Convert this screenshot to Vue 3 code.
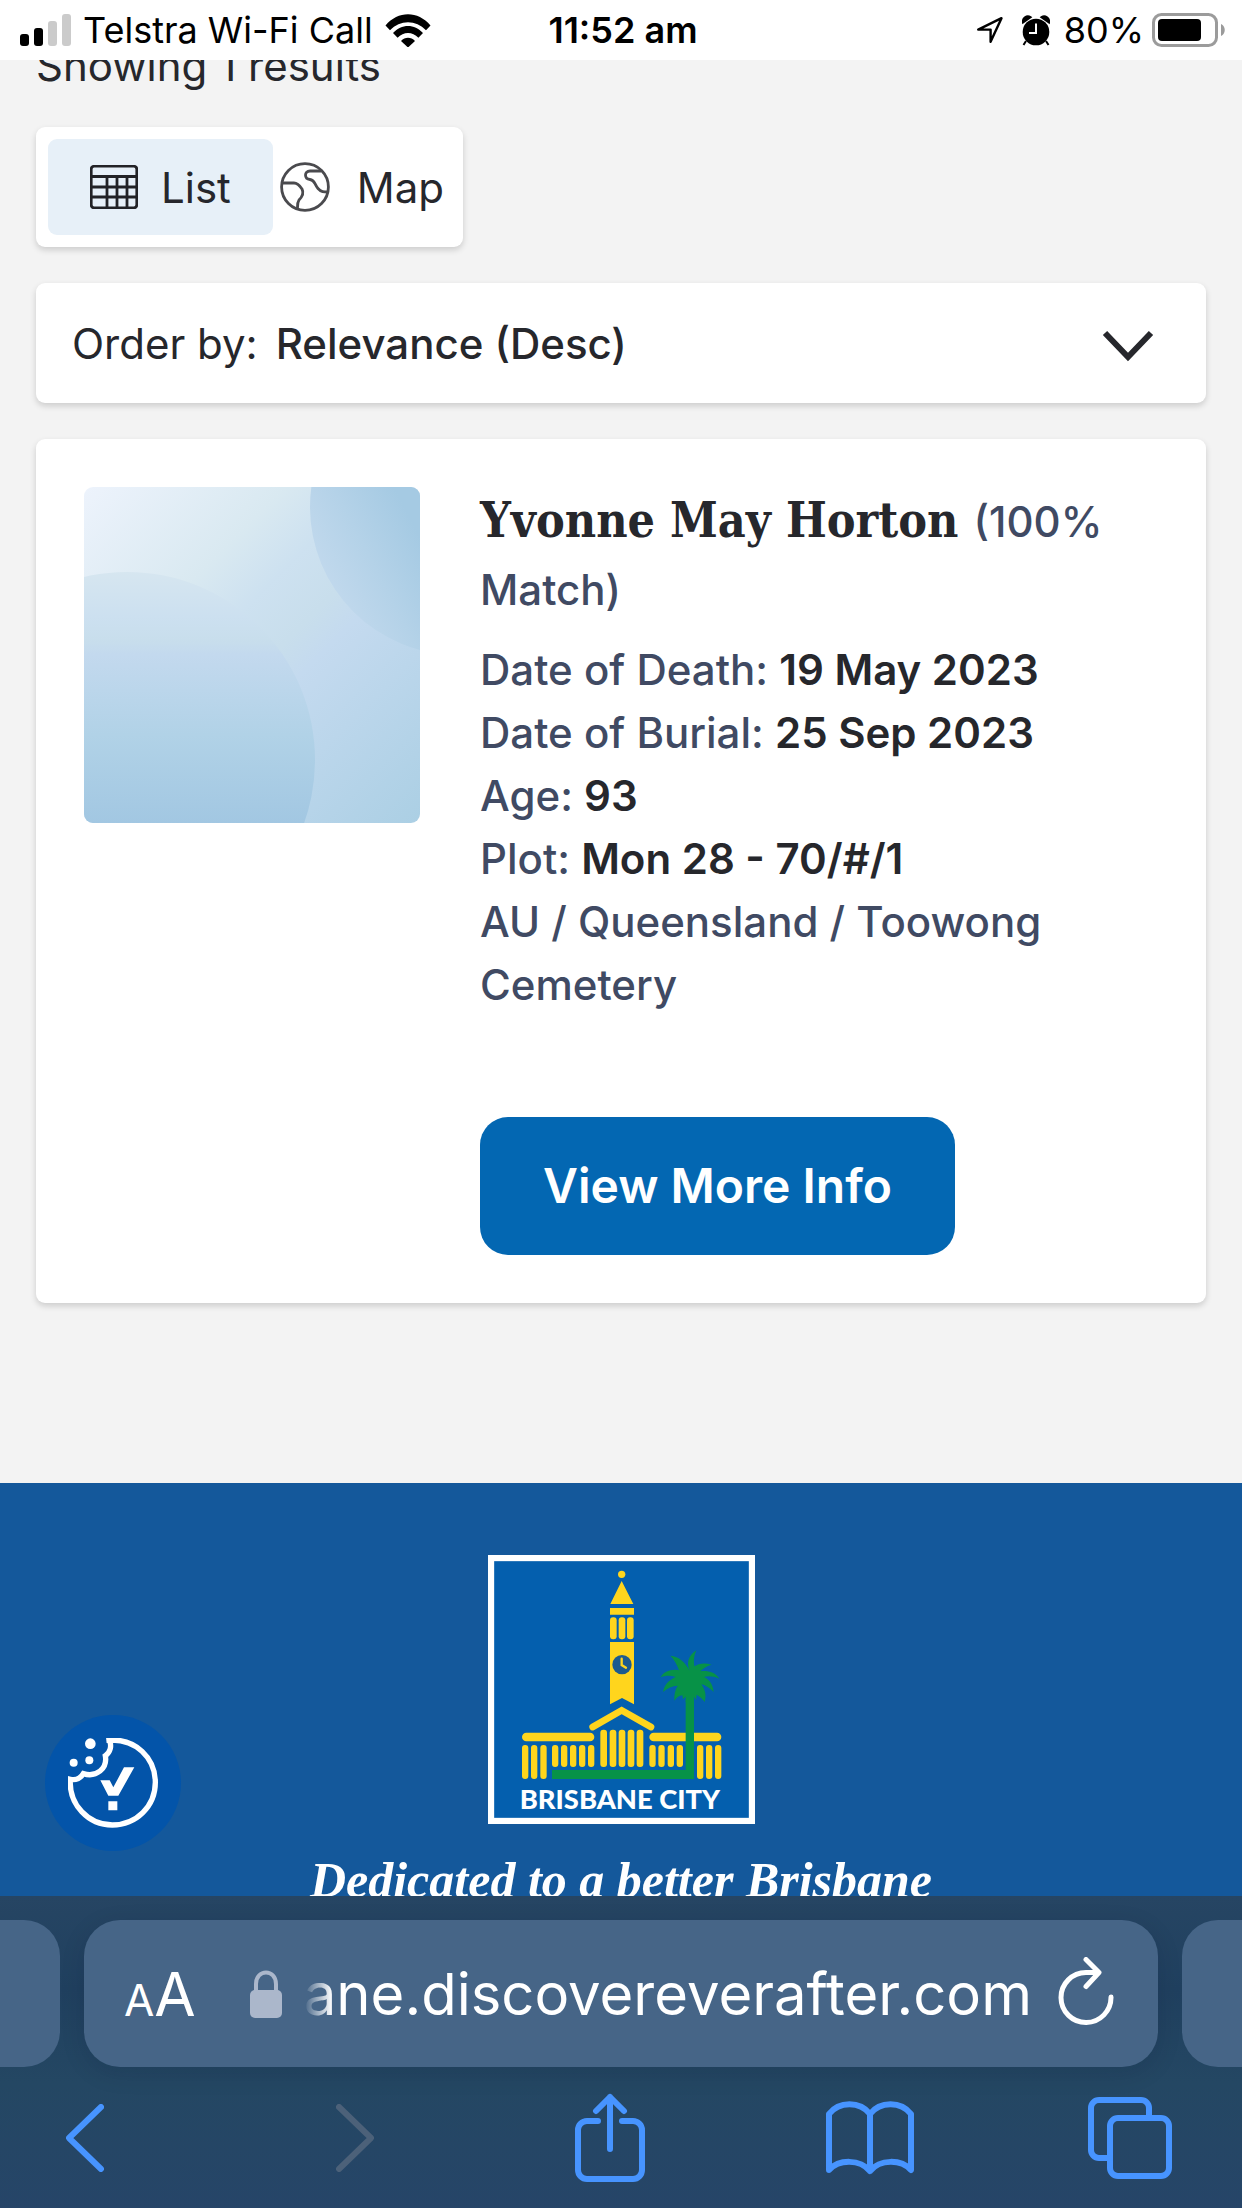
<!-- Cemetery search results as seen in a phone browser: status bar on top,
     scrolled page in the middle, address bar and toolbar at the bottom. -->
<template>
  <div class="screen">
    <header class="status">
      <div class="status-side">
        <svg class="signal" width="51" height="32" viewBox="0 0 51 32" aria-hidden="true">
          <rect x="0" y="20" width="9" height="12" rx="3" />
          <rect x="14" y="14" width="9" height="18" rx="3" />
          <rect x="28" y="7" width="9" height="25" rx="3" fill="#cbcbcb" />
          <rect x="42" y="0" width="9" height="32" rx="3" fill="#cbcbcb" />
        </svg>
        <span class="carrier">Telstra Wi-Fi Call</span>
        <svg width="46" height="33" viewBox="0 0 46 33" aria-hidden="true">
          <path d="M0.5 11.5C13 -3.5 33 -3.5 45.500 11.500L41 16.200C31 5.500 15 5.500 5 16.200Z" />
          <path d="M8 19C16.500 9.500 29.500 9.500 38 19L33.400 23.800C27.500 17.500 18.500 17.500 12.600 23.800Z" />
          <path d="M16 27C20 22.800 26 22.800 30 27L23 33.500Z" />
        </svg>
      </div>
      <strong class="time">11:52 am</strong>
      <div class="status-side status-side--right">
        <svg width="28" height="28" viewBox="0 0 28 28" aria-hidden="true">
          <path d="M25.500 2.200L14.600 25.800V13.600H2.200Z" fill="none" stroke="#000" stroke-width="2.400" stroke-linejoin="round" />
        </svg>
        <svg class="alarm" width="28" height="31" viewBox="0 0 28 31" aria-hidden="true">
          <circle cx="14" cy="17" r="13.300" />
          <path d="M1 7.500A5 5 0 0 1 8.500 2.200ZM27 7.500A5 5 0 0 0 19.500 2.200ZM4 26L1.500 30M24 26L26.500 30" stroke="#000" stroke-width="2" />
          <path d="M14 8.500V18H7" fill="none" stroke="#fff" stroke-width="2" />
        </svg>
        <span>80%</span>
        <svg class="battery" width="74" height="34" viewBox="0 0 74 34" aria-hidden="true">
          <rect x="1.500" y="1.500" width="63" height="31" rx="8" fill="none" stroke="#9b9b9b" stroke-width="3" />
          <rect x="6" y="6" width="43" height="22" rx="4" />
          <path d="M69 11C74 13 74 21 69 23Z" fill="#9b9b9b" />
        </svg>
      </div>
    </header>

    <div class="page">
      <main class="results">
        <p class="count">Showing 1 results</p>

        <div class="views">
          <button
            type="button"
            class="view"
            :class="{ 'view--active': view === 'list' }"
            @click="view = 'list'"
          >
            <svg width="48" height="44" viewBox="0 0 48 44" aria-hidden="true">
              <g fill="none" stroke="#222226" stroke-width="2.800">
                <rect x="1.200" y="1.200" width="45.600" height="41.600" rx="3" />
                <path d="M1 11.500H47M1 22H47M1 32H47M17 11.500V43M27 11.500V43M37 11.500V43" />
              </g>
            </svg>
            List
          </button>
          <button
            type="button"
            class="view view--map"
            :class="{ 'view--active': view === 'map' }"
            @click="view = 'map'"
          >
            <svg width="50" height="50" viewBox="0 0 50 50" aria-hidden="true">
              <g fill="none" stroke="#4a4a4e" stroke-width="2.800" stroke-linejoin="round">
                <circle cx="25" cy="25" r="23.400" />
                <path d="M1.500 21H14C17 21 20 24 22 27C24 31 23 34 19 38C17 41 17.500 44 17.500 47" />
                <path d="M41 9H30C24 9 24 17 30 17.500C35 18 34 22 38 26.500C41 30 44 30 48 30" />
              </g>
            </svg>
            Map
          </button>
        </div>

        <div class="order">
          <label for="order">Order by:</label>
          <select id="order" v-model="order">
            <option>Relevance (Desc)</option>
          </select>
          <svg class="chevron" width="52" height="38" viewBox="0 0 52 38" aria-hidden="true">
            <path d="M3 9L26 33L49 9" fill="none" stroke="#26272c" stroke-width="6" />
          </svg>
        </div>

        <article class="record">
          <svg class="cover" width="336" height="336" viewBox="0 0 336 336" aria-hidden="true">
            <defs>
              <linearGradient id="sky" x1="0" y1="0" x2="1" y2="1">
                <stop offset="0" stop-color="#edf3fc" />
                <stop offset="0.300" stop-color="#d9e9f1" />
                <stop offset="0.420" stop-color="#cde1f0" />
                <stop offset="0.530" stop-color="#c8deec" />
                <stop offset="0.600" stop-color="#c4daef" />
                <stop offset="1" stop-color="#abcfe4" />
              </linearGradient>
              <linearGradient id="hill" x1="0" y1="85" x2="0" y2="336" gradientUnits="userSpaceOnUse">
                <stop offset="0" stop-color="#d6e6f0" />
                <stop offset="0.180" stop-color="#cce0f0" />
                <stop offset="0.270" stop-color="#c8deec" />
                <stop offset="0.330" stop-color="#c3d9ee" />
                <stop offset="0.650" stop-color="#b1d2e7" />
                <stop offset="1" stop-color="#a2c7e2" />
              </linearGradient>
              <linearGradient id="sun" x1="240" y1="100" x2="336" y2="50" gradientUnits="userSpaceOnUse">
                <stop offset="0" stop-color="#c2d9ed" />
                <stop offset="0.500" stop-color="#b4d2e8" />
                <stop offset="1" stop-color="#a5cae3" />
              </linearGradient>
            </defs>
            <rect width="336" height="336" fill="url(#sky)" />
            <circle cx="374" cy="20" r="148" fill="url(#sun)" />
            <circle cx="43" cy="273" r="188" fill="url(#hill)" />
          </svg>
          <div class="info">
            <h2 class="name">
              Yvonne May Horton <span class="match">(100% Match)</span>
            </h2>
            <ul class="facts">
              <li v-for="fact in facts" :key="fact.label">
                {{ fact.label }}: <b>{{ fact.value }}</b>
              </li>
              <li>AU / Queensland / Toowong Cemetery</li>
            </ul>
            <a class="more" href="#">View More Info</a>
          </div>
        </article>
      </main>

      <footer class="footer">
        <svg class="crest" width="267" height="269" viewBox="24 45 801 807" role="img" aria-label="Brisbane City">
          <rect x="33" y="54" width="783" height="789" fill="#045fae" stroke="#fff" stroke-width="19" />
          <g fill="#ffd51d">
            <circle cx="425" cy="103" r="11" />
            <path d="M425 123L460 192H391ZM390 204H462V224H390ZM390 306H462V493L426 474L390 493Z" />
            <rect v-for="x in [390, 416, 441]" :key="x" :x="x" y="232" width="20" height="66" rx="9" />
            <rect v-for="x in [361, 389, 416, 443, 470]" :key="x" :x="x" y="569" width="20" height="112" rx="9" />
            <rect v-for="x in [216, 243, 270, 297, 324, 508, 535, 563, 590]" :key="x" :x="x" y="615" width="19" height="66" rx="9" />
            <rect v-for="x in [126, 153, 181, 651, 678, 705]" :key="x" :x="x" y="615" width="19" height="102" rx="9" />
            <rect x="126" y="578" width="217" height="26" rx="13" />
            <rect x="508" y="578" width="216" height="26" rx="13" />
          </g>
          <path d="M338 561L425 511L513 561" fill="none" stroke="#ffd51d" stroke-width="20" stroke-linecap="round" />
          <circle cx="426" cy="374" r="29" fill="#1d5b8f" />
          <path d="M425 356V375L438 383" fill="none" stroke="#ffd51d" stroke-width="7" stroke-linecap="round" />
          <path d="M617 690V480H642V717H216V690Z" fill="#079247" />
          <path
            d="M629 392C620 372 622 348 649 331C641 350 641 362 643 379C655 371 673 367 695 374C678 379 668 386 661 394C684 391 706 397 718 416C700 409 684 407 672 411C689 419 699 434 701 456C688 443 675 435 664 433C675 448 680 465 674 486C667 476 659 469 650 464L648 480L642 470V486H617V470L609 478L607 466C598 467 590 472 583 482C582 465 585 449 593 437C577 438 562 444 549 456C552 436 566 420 587 411C571 406 557 406 542 412C551 395 574 386 597 391C590 370 581 357 571 347C597 349 616 367 629 392Z"
            fill="#079247"
          />
          <text x="119" y="808" class="crest-text">BRISBANE CITY</text>
        </svg>
        <p class="motto">Dedicated to a better Brisbane</p>

        <button type="button" class="cookie" aria-label="Cookie settings">
          <svg width="90" height="90" viewBox="0 0 270 270" aria-hidden="true">
            <path
              d="M115 7C205 -2 262 62 262 133C262 205 205 261 133 261C61 261 2 200 7 124C25 128 39 119 46 107C85 119 119 92 112 53C127 43 132 24 124 7"
              fill="none" stroke="#fff" stroke-width="16"
            />
            <circle cx="67" cy="17" r="16" fill="#fff" />
            <circle cx="17" cy="74" r="12" fill="#fff" />
            <circle cx="64" cy="67" r="12" fill="#fff" />
            <path d="M97 127H125L136 148L168 88H199L151 173H121ZM121 190H148V217H121Z" fill="#fff" />
          </svg>
        </button>
      </footer>
    </div>

    <footer class="browser">
      <div class="tabs">
        <div class="tab tab--before"></div>
        <div class="tab tab--current">
          <button type="button" class="text-size" aria-label="Text size">
            <span class="text-size-small">A</span>A
          </button>
          <svg class="lock" width="32" height="48" viewBox="0 0 32 48" aria-hidden="true">
            <path d="M6 23V14C6 -1.500 26 -1.500 26 14V23" fill="none" stroke="#abb7cb" stroke-width="4" />
            <rect y="20" width="32" height="28" rx="5" fill="#abb7cb" />
          </svg>
          <input v-model="address" class="address" type="text" aria-label="Address">
          <button type="button" class="reload" aria-label="Reload">
            <svg width="56" height="74" viewBox="0 0 56 74" aria-hidden="true">
              <path d="M28 2.500L41 15.500L28 29.500M40 15.500H28A25 25 0 1 0 53 40" fill="none" stroke="#fff" stroke-width="5" stroke-linecap="round" stroke-linejoin="round" />
            </svg>
          </button>
        </div>
        <div class="tab tab--after"></div>
      </div>
      <nav class="tools">
        <button type="button" aria-label="Back">
          <svg width="38" height="68" viewBox="0 0 38 68"><path d="M35 3L3 34L35 65" /></svg>
        </button>
        <button type="button" aria-label="Forward" disabled>
          <svg width="38" height="68" viewBox="0 0 38 68"><path d="M3 3L35 34L3 65" /></svg>
        </button>
        <button type="button" aria-label="Share">
          <svg width="70" height="90" viewBox="0 0 70 90">
            <path d="M23 28H12A9 9 0 0 0 3 37V77A9 9 0 0 0 12 86H58A9 9 0 0 0 67 77V37A9 9 0 0 0 58 28H47M35 56V4M21 18L35 4L49 18" />
          </svg>
        </button>
        <button type="button" aria-label="Bookmarks">
          <svg width="88" height="74" viewBox="0 0 88 74">
            <path d="M44 13C34 0 13 0 3 13V69C13 58 34 58 44 70C54 58 75 58 85 69V13C75 0 54 0 44 13V70" />
          </svg>
        </button>
        <button type="button" aria-label="Tabs">
          <svg width="84" height="82" viewBox="0 0 84 82">
            <rect x="22" y="21" width="59" height="58" rx="8" />
            <path d="M61 21V11A8 8 0 0 0 53 3H11A8 8 0 0 0 3 11V53A8 8 0 0 0 11 61H22" />
          </svg>
        </button>
      </nav>
    </footer>
  </div>
</template>

<script setup>
import { ref } from 'vue'

const view = ref('list')
const order = ref('Relevance (Desc)')
const address = ref('ane.discovereverafter.com')

const facts = [
  { label: 'Date of Death', value: '19 May 2023' },
  { label: 'Date of Burial', value: '25 Sep 2023' },
  { label: 'Age', value: '93' },
  { label: 'Plot', value: 'Mon 28 - 70/#/1' },
]
</script>

<style>
body { margin: 0; }
</style>

<style scoped>
.screen {
  display: flex;
  flex-direction: column;
  height: 100vh;
  overflow: hidden;
  font-family: Inter, "Liberation Sans", sans-serif;
  color: #26272c;
  background: #f3f3f3;
}
button, input, select {
  margin: 0;
  padding: 0;
  border: none;
  background: none;
  font: inherit;
  color: inherit;
}
button { cursor: pointer; }
svg { display: block; flex: none; }

/* status bar */
.status {
  display: grid;
  grid-template-columns: 1fr auto 1fr;
  align-items: center;
  height: 60px;
  flex: none;
  padding: 0 16px 0 20px;
  box-sizing: border-box;
  background: #fff;
  color: #000;
  font-size: 36px;
  white-space: nowrap;
}
.status-side { display: flex; align-items: center; }
.status-side--right { justify-content: flex-end; }
.carrier { margin: 0 12px; }
.time { font-weight: 600; }
.alarm { margin: 0 14px 0 18px; }
.battery { margin-left: 8px; }

/* page */
.page {
  flex: 1;
  min-height: 0;
  overflow: hidden;
}
.results {
  display: flex;
  flex-direction: column;
  gap: 36px;
  margin-top: -24px;
  padding: 0 36px 180px;
}
.count {
  margin: 0 0 -5px;
  font-size: 42px;
  line-height: 60px;
}
.views, .order, .record {
  background: #fff;
  border-radius: 9px;
  box-shadow: 0 3px 6px rgba(0, 0, 0, 0.16);
}
.views {
  display: flex;
  align-self: flex-start;
  padding: 12px;
}
.view {
  display: flex;
  align-items: center;
  gap: 23px;
  height: 96px;
  padding: 0 42px;
  border-radius: 9px;
  font-size: 42px;
}
.view--map { gap: 27px; padding: 0 7px; }
.view--active { background: #e7f0f8; }
.order {
  display: flex;
  align-items: center;
  gap: 18px;
  height: 120px;
  padding: 0 52px 0 36px;
  font-size: 42px;
}
.order select {
  flex: 1;
  appearance: none;
  font-weight: 500;
}
.chevron { pointer-events: none; }
.record {
  display: flex;
  align-items: flex-start;
  gap: 60px;
  padding: 48px;
}
.cover { border-radius: 9px; }
.info {
  flex: 1;
  color: #404a63;
  font-size: 42px;
  font-weight: 500;
}
.name {
  margin: 0 0 15px;
  color: #26272c;
  font-family: "DejaVu Serif Condensed", "DejaVu Serif", serif;
  font-size: 48px;
  font-weight: 700;
  line-height: 66px;
}
.match {
  color: #404a63;
  font-family: Inter, "Liberation Sans", sans-serif;
  font-size: 42px;
  font-weight: 500;
}
.facts {
  margin: 0 0 101px;
  padding: 0;
  list-style: none;
  line-height: 63px;
}
.facts b { color: #26272c; font-weight: 600; }
.more {
  display: inline-block;
  padding: 0 63px;
  border-radius: 28px;
  background: #0367b2;
  color: #fff;
  font-size: 48px;
  font-weight: 600;
  line-height: 138px;
  text-decoration: none;
  vertical-align: top;
}

/* council footer */
.footer {
  position: relative;
  display: flex;
  flex-direction: column;
  align-items: center;
  min-height: 480px;
  padding-top: 72px;
  background: #14589b;
}
.crest-text {
  fill: #fff;
  font-family: Lato, sans-serif;
  font-size: 82px;
  font-weight: 900;
}
.motto {
  margin: 26px 0 0;
  color: #fff;
  font-family: "Liberation Serif", serif;
  font-size: 50px;
  font-style: italic;
  font-weight: 700;
  line-height: 60px;
}
.cookie {
  position: absolute;
  top: 232px;
  left: 45px;
  display: grid;
  place-items: center;
  width: 136px;
  height: 136px;
  border-radius: 50%;
  background: #0354a9;
}

/* browser chrome */
.browser {
  flex: none;
  box-sizing: border-box;
  height: 312px;
  padding-top: 24px;
  background: linear-gradient(#264563, #20405f 30%, #244763 60%, #264568);
}
.tabs { display: flex; gap: 24px; }
.tab {
  height: 147px;
  background: #466587;
}
.tab--before { width: 60px; border-radius: 0 36px 36px 0; }
.tab--after { width: 60px; border-radius: 36px 0 0 36px; }
.tab--current {
  display: flex;
  flex: 1;
  align-items: center;
  min-width: 0;
  padding: 0 44px 0 40px;
  border-radius: 36px;
  box-shadow: 0 6px 24px rgba(0, 20, 40, 0.12);
  color: #fff;
}
.text-size { font-size: 60px; white-space: nowrap; }
.text-size-small { font-size: 44px; }
.lock { margin: 0 22px 0 54px; }
.address {
  flex: 1;
  min-width: 0;
  font-size: 58px;
  outline: none;
  mask-image: linear-gradient(90deg, transparent, #000 28px);
}
.tools {
  display: grid;
  grid-template-columns: 270fr 239fr 251fr 262fr 84px;
  justify-items: start;
  align-items: center;
  height: 141px;
  padding: 0 70px 0 66px;
}
.tools path, .tools rect {
  fill: none;
  stroke: #4794ff;
  stroke-width: 6;
  stroke-linecap: round;
  stroke-linejoin: round;
}
.tools button:disabled path { stroke: #4c6179; }
</style>
